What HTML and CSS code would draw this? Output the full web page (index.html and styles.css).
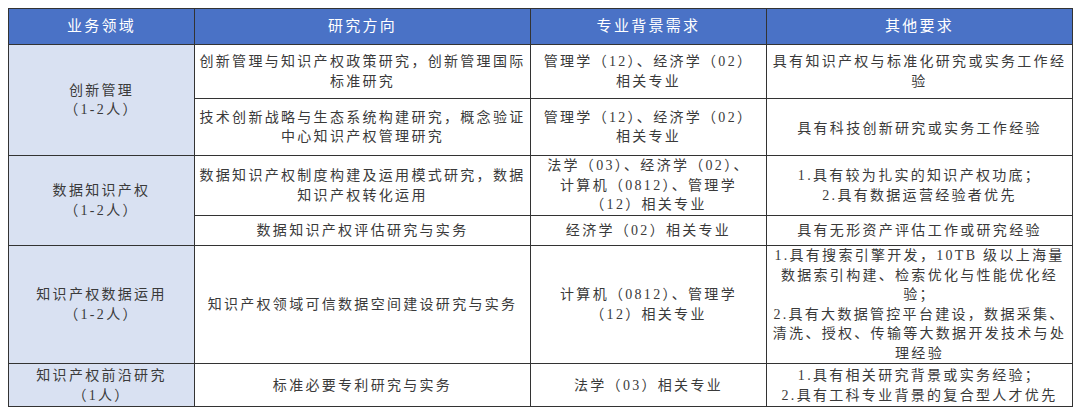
FILE: index.html
```html
<!DOCTYPE html>
<html lang="zh-CN">
<head>
<meta charset="utf-8">
<title>岗位需求</title>
<link rel="stylesheet" href="styles.css">
</head>
<body>
<table class="req">
  <colgroup>
    <col class="c-area">
    <col class="c-dir">
    <col class="c-major">
    <col class="c-other">
  </colgroup>
  <thead>
    <tr class="r-head">
      <th>业务领域</th>
      <th>研究方向</th>
      <th>专业背景需求</th>
      <th>其他要求</th>
    </tr>
  </thead>
  <tbody>
    <tr class="r1">
      <td class="area" rowspan="2">创新管理<br>（1-2人）</td>
      <td>创新管理与知识产权政策研究，创新管理国际<br>标准研究</td>
      <td>管理学（12）、经济学（02）<br>相关专业</td>
      <td>具有知识产权与标准化研究或实务工作经<br>验</td>
    </tr>
    <tr class="r2">
      <td>技术创新战略与生态系统构建研究，概念验证<br>中心知识产权管理研究</td>
      <td>管理学（12）、经济学（02）<br>相关专业</td>
      <td class="low">具有科技创新研究或实务工作经验</td>
    </tr>
    <tr class="r3">
      <td class="area" rowspan="2">数据知识产权<br>（1-2人）</td>
      <td>数据知识产权制度构建及运用模式研究，数据<br>知识产权转化运用</td>
      <td>法学（03）、经济学（02）、<br>计算机（0812）、管理学<br>（12）相关专业</td>
      <td>1.具有较为扎实的知识产权功底；<br>2.具有数据运营经验者优先</td>
    </tr>
    <tr class="r4">
      <td>数据知识产权评估研究与实务</td>
      <td>经济学（02）相关专业</td>
      <td>具有无形资产评估工作或研究经验</td>
    </tr>
    <tr class="r5">
      <td class="area">知识产权数据运用<br>（1-2人）</td>
      <td>知识产权领域可信数据空间建设研究与实务</td>
      <td>计算机（0812）、管理学<br>（12）相关专业</td>
      <td>1.具有搜索引擎开发，10TB 级以上海量<br>数据索引构建、检索优化与性能优化经<br>验；<br>2.具有大数据管控平台建设，数据采集、<br>清洗、授权、传输等大数据开发技术与处<br>理经验</td>
    </tr>
    <tr class="r6">
      <td class="area">知识产权前沿研究<br>（1人）</td>
      <td>标准必要专利研究与实务</td>
      <td>法学（03）相关专业</td>
      <td>1.具有相关研究背景或实务经验；<br>2.具有工科专业背景的复合型人才优先</td>
    </tr>
  </tbody>
</table>
</body>
</html>
```
FILE: styles.css
```css
html, body {
  margin: 0;
  padding: 0;
  background: #ffffff;
  overflow: hidden;
}
body {
  padding: 8px;
  font-family: "Liberation Serif", "Noto Sans CJK SC", serif;
  color: #3a3a3a;
}
.req {
  border-collapse: collapse;
  table-layout: fixed;
  width: 1064px;
  font-size: 14px;
  line-height: 19.5px;
  letter-spacing: 2.3px;
}
.c-area { width: 186px; }
.c-dir { width: 336px; }
.c-major { width: 236px; }
.c-other { width: 306px; }
.req th,
.req td {
  border: 1px solid #333333;
  padding: 0 2px;
  text-align: center;
  vertical-align: middle;
  white-space: nowrap;
  overflow: hidden;
}
.r-head th {
  background: #4a72c6;
  color: #ffffff;
  font-weight: normal;
  font-size: 15px;
}
.req td.area {
  background: #d9e1f2;
}
.r-head { height: 36px; }
.r1 { height: 54px; }
.r2 { height: 57px; }
.r3 { height: 60px; }
.r4 { height: 30px; }
.r5 { height: 118px; }
.r6 { height: 40px; }
.r6 td { line-height: 20px; padding-top: 2px; }
.req td.low { padding-top: 4px; }
```
